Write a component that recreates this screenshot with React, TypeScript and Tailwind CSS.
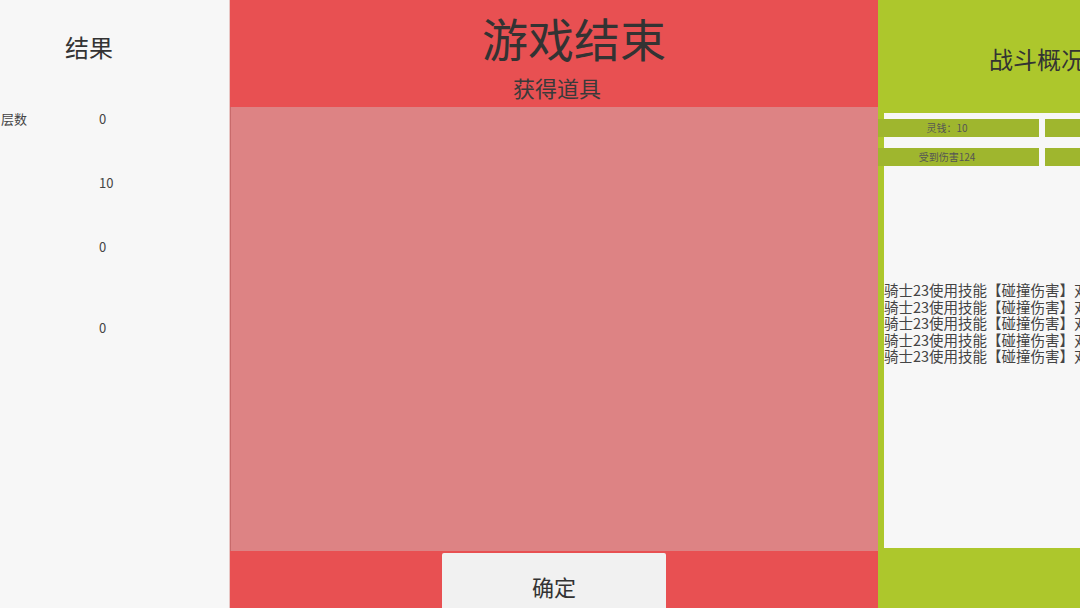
import React from 'react';

const font = { fontFamily: '"Noto Sans CJK SC", "Noto Sans", sans-serif' };

const stats = [
  { label: '层数', value: '0', top: 'mt-[46px]' },
  { label: '', value: '10', top: 'mt-[46px]' },
  { label: '', value: '0', top: 'mt-[46px]' },
  { label: '', value: '0', top: 'mt-[63px]' },
];

const logs = Array.from({ length: 5 }, () => '骑士23使用技能【碰撞伤害】对敌人造成了伤害');

function ResultPanel() {
  return (
    <div className="w-[230px] h-full flex-shrink-0 bg-[#f7f7f7] border-r border-[#e8c6c4] flex flex-col">
      <div className="mt-[31px] h-[32px] flex items-center justify-center pr-[51px] text-[24px] leading-none text-[#333]">
        结果
      </div>
      {stats.map((s, i) => (
        <div key={i} className={`${s.top} h-[18px] flex items-center text-[13px] leading-none text-[#444]`}>
          <span className="w-[99px] pl-[1px]">{s.label}</span>
          <span>{s.value}</span>
        </div>
      ))}
    </div>
  );
}

function GameOverPanel() {
  return (
    <div className="w-[648px] h-full flex-shrink-0 bg-[#e85052] flex flex-col overflow-hidden">
      <div className="h-[107px] flex-shrink-0 flex flex-col items-center">
        <div className="mt-[10px] h-[54px] flex items-center pl-[40px] text-[46px] leading-none text-[#333]">
          游戏结束
        </div>
        <div className="mt-[10px] h-[26px] flex items-center pl-[6px] text-[22px] leading-none text-[#3a3a3a]">
          获得道具
        </div>
      </div>
      <div className="h-[444px] flex-shrink-0 bg-[#dd8384] border-l border-[#c86a6b]" />
      <div className="flex justify-center pt-[2px] flex-shrink-0">
        <button className="w-[224px] h-[60px] rounded-t-[2px] bg-[#f1f1f1] flex items-start justify-center pt-[22px] text-[22px] leading-none text-[#333]">
          确定
        </button>
      </div>
    </div>
  );
}

function BattlePanel() {
  return (
    <div className="flex-1 h-full bg-[#adc72c] flex flex-col overflow-hidden">
      <div className="h-[113px] flex-shrink-0 flex items-center pl-[111px] text-[24px] leading-none text-[#333] whitespace-nowrap">
        <span className="mt-[4px]">战斗概况</span>
      </div>
      <div className="ml-[6px] h-[435px] flex-shrink-0 bg-[#f7f7f7] flex flex-col">
        <div className="-ml-[7px] mt-[6px] flex flex-col gap-[11px]">
          {['灵钱：10', '受到伤害124'].map((t) => (
            <div key={t} className="flex gap-[6px]">
              <div className="w-[162px] h-[18px] flex-shrink-0 bg-[#9fb62e] flex items-center justify-center pr-[22px] text-[10px] leading-none text-[#555]">
                {t}
              </div>
              <div className="w-[60px] h-[18px] flex-shrink-0 bg-[#9fb62e]" />
            </div>
          ))}
        </div>
        <div className="mt-[116px] flex flex-col text-[14.5px] leading-[16.5px] text-[#444] whitespace-nowrap">
          {logs.map((l, i) => (
            <div key={i}>{l}</div>
          ))}
        </div>
      </div>
    </div>
  );
}

export default function App() {
  return (
    <div className="w-[1080px] h-[608px] flex overflow-hidden" style={font}>
      <ResultPanel />
      <GameOverPanel />
      <BattlePanel />
    </div>
  );
}
